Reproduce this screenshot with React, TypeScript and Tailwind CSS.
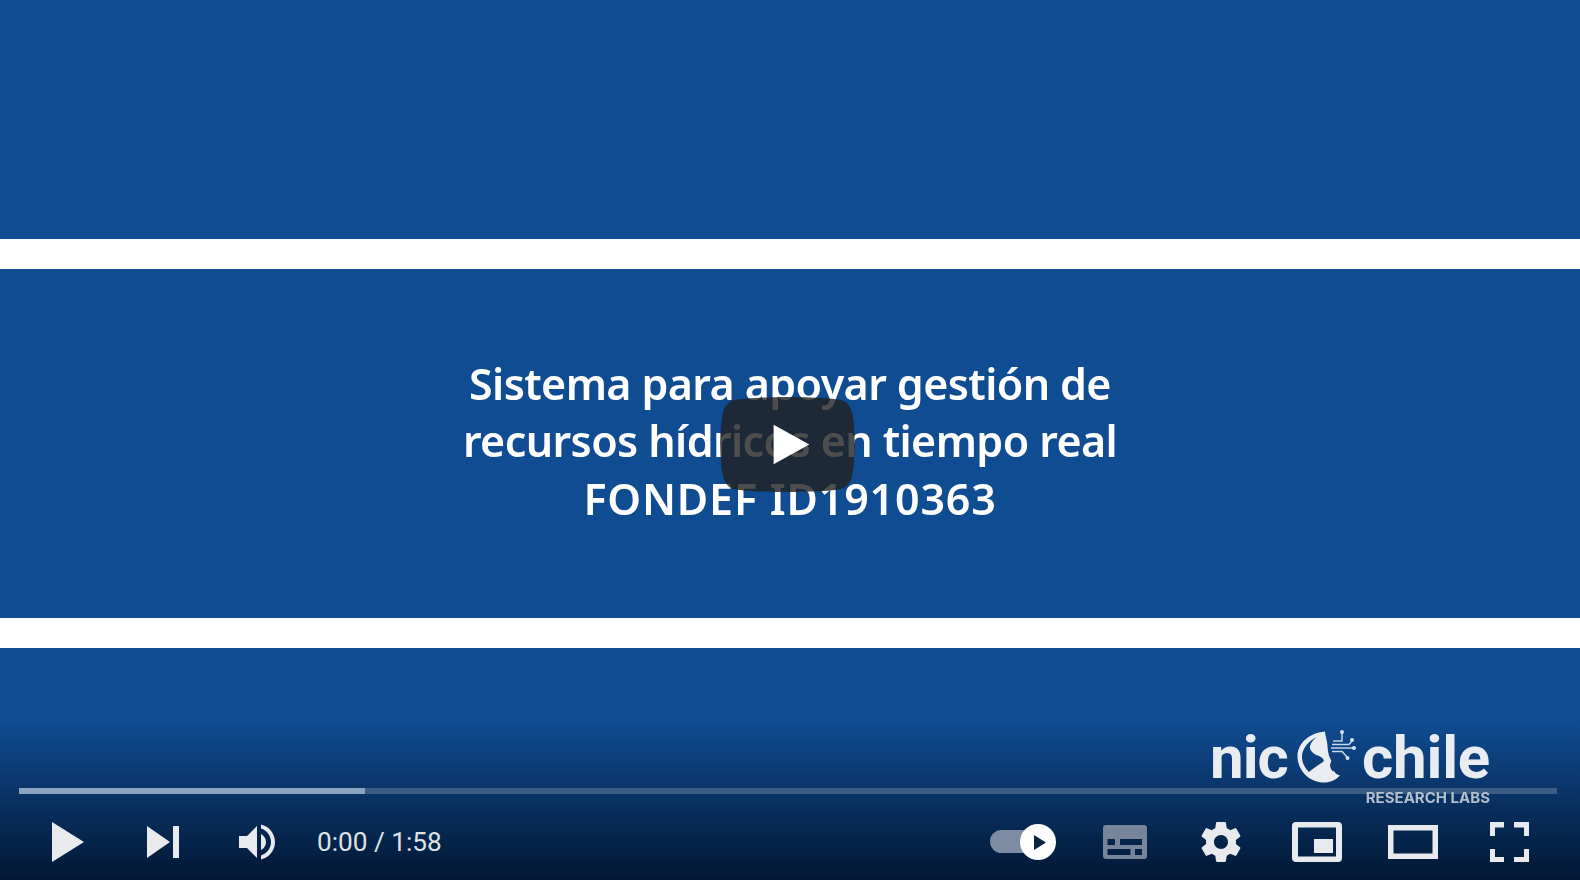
const gear =
  "m 23.94,18.78 c .03,-0.25 .05,-0.51 .05,-0.78 0,-0.27 -0.02,-0.52 -0.05,-0.78 l 1.68,-1.32 c .15,-0.12 .19,-0.33 .09,-0.51 l -1.6,-2.76 c -0.09,-0.17 -0.31,-0.24 -0.48,-0.17 l -1.99,.8 c -0.41,-0.32 -0.86,-0.58 -1.35,-0.78 l -0.30,-2.12 c -0.02,-0.19 -0.19,-0.33 -0.39,-0.33 l -3.2,0 c -0.2,0 -0.36,.14 -0.39,.33 l -0.30,2.12 c -0.48,.2 -0.93,.47 -1.35,.78 l -1.99,-0.8 c -0.18,-0.07 -0.39,0 -0.48,.17 l -1.6,2.76 c -0.10,.17 -0.05,.39 .09,.51 l 1.68,1.32 c -0.03,.25 -0.05,.52 -0.05,.78 0,.26 .02,.52 .05,.78 l -1.68,1.32 c -0.15,.12 -0.19,.33 -0.09,.51 l 1.6,2.76 c .09,.17 .31,.24 .48,.17 l 1.99,-0.8 c .41,.32 .86,.58 1.35,.78 l .30,2.12 c .02,.19 .19,.33 .39,.33 l 3.2,0 c .2,0 .36,-0.14 .39,-0.33 l .30,-2.12 c .48,-0.2 .93,-0.47 1.35,-0.78 l 1.99,.8 c .18,.07 .39,0 .48,-0.17 l 1.6,-2.76 c .09,-0.17 .05,-0.39 -0.09,-0.51 l -1.68,-1.32 0,0 z m -5.94,2.01 c -1.54,0 -2.8,-1.25 -2.8,-2.8 0,-1.54 1.25,-2.8 2.8,-2.8 1.54,0 2.8,1.25 2.8,2.8 0,1.54 -1.25,2.8 -2.8,2.8 l 0,0 z";

const volume =
  "M8,21 L12,21 L17,26 L17,10 L12,15 L8,15 L8,21 Z M19,14 L19,22 C20.48,21.32 21.5,19.77 21.5,18 C21.5,16.26 20.48,14.74 19,14 Z M19,11.29 C21.89,12.15 24,14.83 24,18 C24,21.17 21.89,23.85 19,24.71 L19,26.77 C23.01,25.86 26,22.28 26,18 C26,13.72 23.01,10.14 19,9.23 L19,11.29 Z";

// every control icon is drawn on the same 96x60 cell
function Icon({ children, w = 96 }: { children: React.ReactNode; w?: number }) {
  return (
    <svg width={w} height={60} viewBox={`0 0 ${w} 60`} fill="#e8eaee" className="shrink-0">
      {children}
    </svg>
  );
}

function NicLogo() {
  return (
    <div className="absolute left-[1210px] top-[722px] w-[280px] flex flex-col blur-[0.5px]">
      <div className="flex h-[66px] text-[#e9edf2] font-bold text-[60px] leading-[60px] tracking-[-1px] font-['Roboto',sans-serif]">
        <span className="w-[80px] shrink-0 pt-[6px]">nic</span>
        <svg width={73} height={68} viewBox="0 0 73 68" className="shrink-0 self-start" fill="#e9edf2">
          <path
            fillRule="evenodd"
            d="M35 9.5 C18 11 8 22 7.5 33 C7 48 19 60.5 34 60.5 C40 60.5 46 58 50 53.5 C47 52.5 45 51 44 49 C42 50.5 41 47 40 44 C40 41 42 40 41 38 C38 33 38 28 37 20 C36 15 35 12 35 9.5 Z M27 15 C18 19 12 27 12 35 C12 41 15 46 19 50 C22 47 27 44 33 40 C35 38 33 36 29 34 C23 32 19 28 20 24 C21 20 24 17 27 15 Z"
          />
          <g stroke="#c3d6e8" strokeWidth="1.5" fill="none">
            <path d="M52 11 V19 H43" />
            <path d="M42 22.5 H59 L62 19" />
            <path d="M41 26 H63" />
            <path d="M42 29.5 H52 L57 35" />
          </g>
          <g fill="#d5e2ee">
            <circle cx="52" cy="10" r="2" />
            <circle cx="62" cy="18" r="2" />
            <circle cx="64" cy="26" r="2" />
            <circle cx="57.5" cy="36" r="2" />
          </g>
        </svg>
        <span className="-ml-[1px] pt-[6px] tracking-[-0.2px]">chile</span>
      </div>
      <div className="self-end mt-[2px] text-[15px] leading-[16px] font-bold text-[#b4bfcc] font-['Inter',sans-serif]">RESEARCH LABS</div>
    </div>
  );
}

function BigPlay() {
  return (
    <svg width={135} height={95} viewBox="0 0 68 48" className="absolute left-[720px] top-[397px]">
      <path
        d="M66.52,7.74c-0.78-2.93-2.49-5.41-5.42-6.19C55.79,.13,34,0,34,0S12.21,.13,6.9,1.55 C3.97,2.33,2.27,4.81,1.48,7.74C0.06,13.05,0,24,0,24s.06,10.95,1.48,16.26c.78,2.93,2.49,5.41,5.42,6.19 C12.21,47.87,34,48,34,48s21.79-.13,27.1-1.55c2.93-.78,4.64-3.26,5.42-6.19C67.94,34.95,68,24,68,24S67.94,13.05,66.52,7.74z"
        fill="#212121"
        fillOpacity="0.8"
      />
      <path d="M45,24 27,14 27,34" fill="#fff" />
    </svg>
  );
}

function Controls() {
  return (
    <div className="absolute inset-x-0 bottom-0 h-[160px] bg-gradient-to-b from-transparent to-[#021733] flex flex-col justify-end pl-[19px] pr-[23px] pb-[8px]">
      {/* progress */}
      <div className="flex h-[6px] mb-[18px] bg-white/20">
        <div className="w-[346px] bg-[#8ca3bf]" />
      </div>
      <div className="flex items-center justify-between h-[60px]">
        <div className="flex items-center">
          <Icon>
            <path d="M33 10 L65 30 L33 50 Z" />
          </Icon>
          <Icon>
            <path d="M32 14 L55 30 L32 46 Z" />
            <rect x="58" y="14" width="6" height="32" />
          </Icon>
          <Icon>
            <path d={volume} transform="translate(12 -6) scale(2)" />
          </Icon>
          <span className="ml-[10px] mb-[1px] text-[26.2px] leading-[32px] text-[#dfe2e6] font-['Roboto',sans-serif]">0:00 / 1:58</span>
        </div>
        <div className="flex items-center">
          <Icon w={102}>
            <rect x="15" y="18" width="45" height="23" rx="11.5" fill="#7d8ca3" />
            <circle cx="63" cy="30" r="18" fill="#fff" />
            <path d="M59 23 L71 30.5 L59 38 Z" fill="#0c2444" />
          </Icon>
          <Icon>
            <path
              fill="#77859a"
              fillRule="evenodd"
              d="M29 13 H67 Q70 13 70 16 V44 Q70 47 67 47 H29 Q26 47 26 44 V16 Q26 13 29 13 Z M30.5 27 V33 H38 V27 Z M43 27 V33 H65 V27 Z M30.5 37 V43 H53.5 V37 Z M58 37 V43 H65 V37 Z"
            />
          </Icon>
          <Icon>
            <path d={gear} transform="translate(48 30) scale(2.5) translate(-18 -18)" />
          </Icon>
          <Icon>
            <path
              fillRule="evenodd"
              d="M27 10 H69 Q73 10 73 14 V46 Q73 50 69 50 H27 Q23 50 23 46 V14 Q23 10 27 10 Z M29 15.5 V44.5 H67 V15.5 Z M45 27 H64 V41 H45 Z"
            />
          </Icon>
          <Icon>
            <path fillRule="evenodd" d="M23 13 H73 V47 H23 Z M28.5 18.5 V41.5 H67.5 V18.5 Z" />
          </Icon>
          <Icon>
            <path d="M29 10 H43 V15.5 H34 V24 H29 Z M53 10 H68 V24 H63 V15.5 H53 Z M29 37 H34 V45 H43 V50 H29 Z M63 37 H68 V50 H53 V45 H63 Z" />
          </Icon>
        </div>
      </div>
    </div>
  );
}

export default function App() {
  return (
    <div className="relative w-full h-[880px] overflow-hidden bg-[#104c92] flex flex-col">
      <div className="h-[239px] shrink-0" />
      <div className="h-[30px] shrink-0 bg-white" />
      {/* title slide */}
      <div className="h-[349px] shrink-0 flex items-center justify-center pb-[5px]">
        <h1 className="text-center text-white font-semibold text-[43px] leading-[57.5px] tracking-[-0.6px] blur-[0.3px] font-['Noto_Sans',sans-serif]">
          Sistema para apoyar gestión de
          <br />
          recursos hídricos en tiempo real
          <br />
          <span className="tracking-[0.8px]">FONDEF ID1910363</span>
        </h1>
      </div>
      <div className="h-[30px] shrink-0 bg-white" />
      <Controls />
      <NicLogo />
      <BigPlay />
    </div>
  );
}
